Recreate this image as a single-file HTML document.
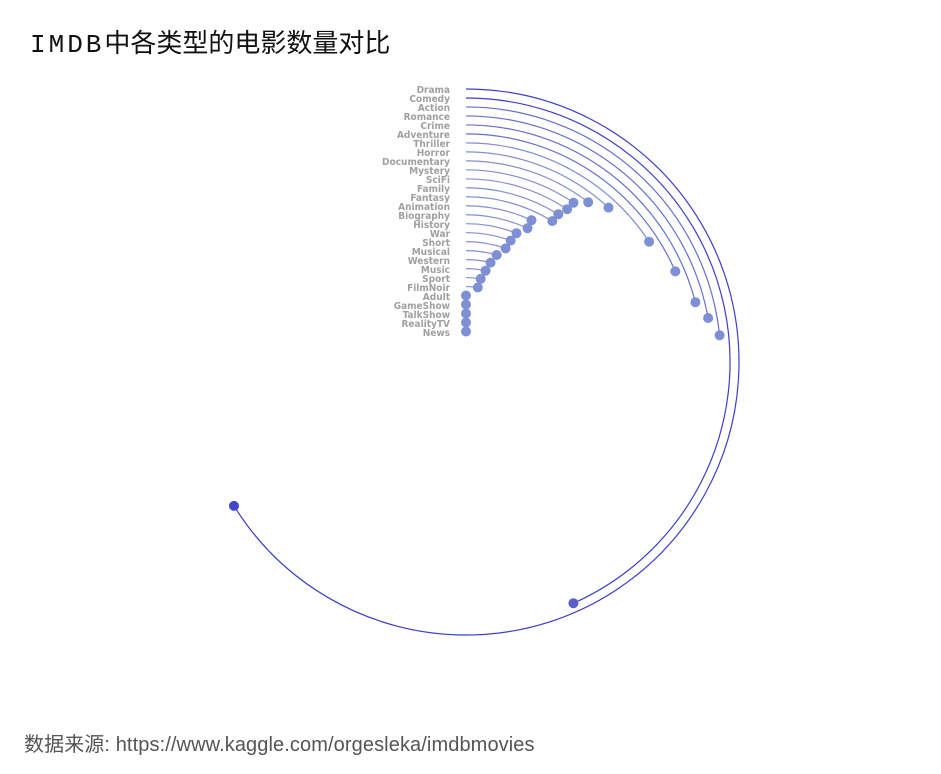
<!DOCTYPE html>
<html><head><meta charset="utf-8"><style>
body{margin:0;background:#fff;width:941px;height:774px;overflow:hidden;font-family:"Liberation Sans","Noto Sans CJK SC",sans-serif}
.t{position:absolute;left:30px;top:23px;font-size:26px;color:#111;font-family:"Liberation Mono","Noto Sans CJK SC",monospace}
.t b{font-weight:normal;letter-spacing:3px}
.s{position:absolute;left:24px;top:728px;font-size:20px;color:#555;letter-spacing:0.1px}
svg{position:absolute;left:0;top:0}
</style></head><body>
<div class="t"><b>IMDB</b>中各类型的电影数量对比</div>
<svg id="c" width="941" height="774">
<g font-size="10" font-weight="bold" fill="#a0a0a0" text-anchor="end" font-family="DejaVu Sans Condensed, Liberation Sans, sans-serif">
<text x="450" y="93">Drama</text><text x="450" y="102">Comedy</text><text x="450" y="111">Action</text><text x="450" y="120">Romance</text><text x="450" y="129">Crime</text><text x="450" y="138">Adventure</text><text x="450" y="147">Thriller</text><text x="450" y="156">Horror</text><text x="450" y="165">Documentary</text><text x="450" y="174">Mystery</text><text x="450" y="183">SciFi</text><text x="450" y="192">Family</text><text x="450" y="201">Fantasy</text><text x="450" y="210">Animation</text><text x="450" y="219">Biography</text><text x="450" y="228">History</text><text x="450" y="237">War</text><text x="450" y="246">Short</text><text x="450" y="255">Musical</text><text x="450" y="264">Western</text><text x="450" y="273">Music</text><text x="450" y="282">Sport</text><text x="450" y="291">FilmNoir</text><text x="450" y="300">Adult</text><text x="450" y="309">GameShow</text><text x="450" y="318">TalkShow</text><text x="450" y="327">RealityTV</text><text x="450" y="336">News</text>
</g>
</svg>
<div class="s">数据来源: https://www.kaggle.com/orgesleka/imdbmovies</div>
<script>
var ang=[238.2,156,84,79.7,75.4,66.6,56.7,42.7,37.4,34,33.5,32,31.5,24.8,24.7,21.4,20.2,19.2,16,13.9,12.1,10,9,0,0,0,0,0];
var cx=466,cy=362,s=document.getElementById('c'),h='';
ang.forEach(function(a,i){
 var r=273-i*8.98,t=a*Math.PI/180,x=cx+r*Math.sin(t),y=cy-r*Math.cos(t);
 var col=i<2?'#3a3ed0':(i<6?'#6470d0':'#8090d4');
 var dc=i==0?'#3f48cc':(i==1?'#5a60c8':'#7f8fd6');
 if(a>0)h+='<path d="M'+cx+' '+(cy-r)+' A'+r+' '+r+' 0 '+(a>180?1:0)+' 1 '+x.toFixed(1)+' '+y.toFixed(1)+'" fill="none" stroke="'+col+'" stroke-width="1.2"/>';
 h+='<circle cx="'+x.toFixed(1)+'" cy="'+y.toFixed(1)+'" r="5" fill="'+dc+'"/>';
});
s.insertAdjacentHTML('beforeend',h);
</script>
</body></html>
